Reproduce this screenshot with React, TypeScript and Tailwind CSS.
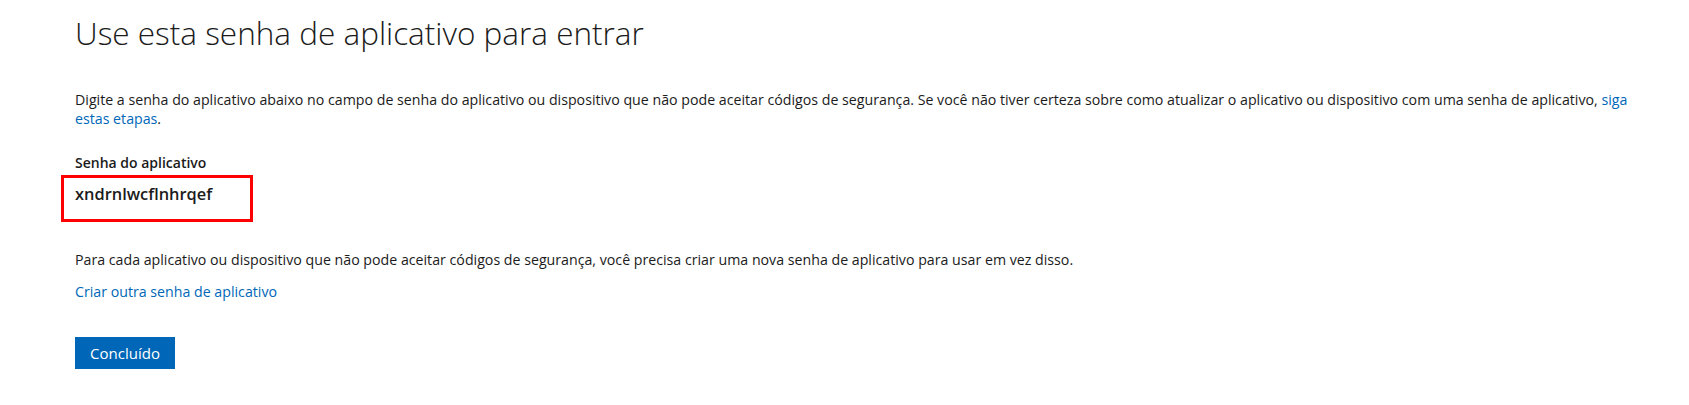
export default function App() {
  return (
    <main className="min-h-screen bg-white text-black" style={{ fontFamily: '"Open Sans", "Noto Sans", sans-serif' }}>
      <div className="pl-[75px] pt-[13px]">
        <h1 className="text-[31.5px] font-light leading-[40px] text-[#1b1b1b]">
          Use esta senha de aplicativo para entrar
        </h1>

        <p className="mt-[37px] w-[1590px] text-[14.2px] leading-[19px] text-[#1b1b1b]">
          Digite a senha do aplicativo abaixo no campo de senha do aplicativo ou dispositivo que não pode
          aceitar códigos de segurança. Se você não tiver certeza sobre como atualizar o aplicativo ou
          dispositivo com uma senha de aplicativo,{" "}
          <a href="#" className="text-[#0067b8]">
            siga estas etapas
          </a>
          .
        </p>

        <div className="mt-[25px] text-[14px] font-semibold leading-[19px] text-[#1b1b1b]">Senha do aplicativo</div>

        {/* password, circled in red */}
        <div className="-ml-[14px] mt-[3px] h-[47px] w-[192px] border-[3px] border-[#ff0000] pl-[11px] pt-[4px]">
          <span className="text-[16.4px] font-semibold leading-[22px] text-[#1b1b1b]">xndrnlwcflnhrqef</span>
        </div>

        <p className="mt-[28px] text-[14.2px] leading-[19px] text-[#1b1b1b]">
          Para cada aplicativo ou dispositivo que não pode aceitar códigos de segurança, você precisa criar uma
          nova senha de aplicativo para usar em vez disso.
        </p>

        <a href="#" className="mt-[13px] block w-fit text-[14.2px] leading-[19px] text-[#0067b8]">
          Criar outra senha de aplicativo
        </a>

        <button className="mt-[36px] h-[32px] w-[100px] bg-[#0067b8] text-[15px] text-white">Concluído</button>
      </div>
    </main>
  );
}
